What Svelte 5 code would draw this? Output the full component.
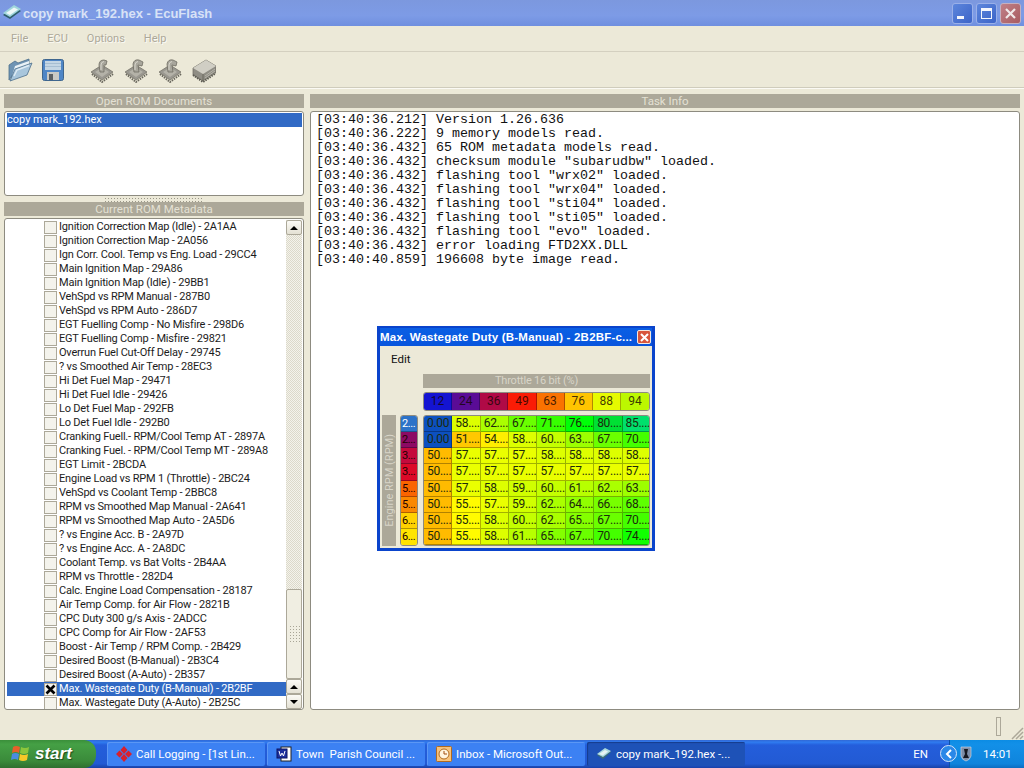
<script>
  const menus = ['File', 'ECU', 'Options', 'Help'];

  const logLines = [
    '[03:40:36.212] Version 1.26.636',
    '[03:40:36.222] 9 memory models read.',
    '[03:40:36.432] 65 ROM metadata models read.',
    '[03:40:36.432] checksum module "subarudbw" loaded.',
    '[03:40:36.432] flashing tool "wrx02" loaded.',
    '[03:40:36.432] flashing tool "wrx04" loaded.',
    '[03:40:36.432] flashing tool "sti04" loaded.',
    '[03:40:36.432] flashing tool "sti05" loaded.',
    '[03:40:36.432] flashing tool "evo" loaded.',
    '[03:40:36.432] error loading FTD2XX.DLL',
    '[03:40:40.859] 196608 byte image read.'
  ];

  const romItems = [
    'Ignition Correction Map (Idle) - 2A1AA',
    'Ignition Correction Map - 2A056',
    'Ign Corr. Cool. Temp vs Eng. Load - 29CC4',
    'Main Ignition Map - 29A86',
    'Main Ignition Map (Idle) - 29BB1',
    'VehSpd vs RPM Manual - 287B0',
    'VehSpd vs RPM Auto - 286D7',
    'EGT Fuelling Comp - No Misfire - 298D6',
    'EGT Fuelling Comp - Misfire - 29821',
    'Overrun Fuel Cut-Off Delay - 29745',
    '? vs Smoothed Air Temp - 28EC3',
    'Hi Det Fuel Map - 29471',
    'Hi Det Fuel Idle - 29426',
    'Lo Det Fuel Map - 292FB',
    'Lo Det Fuel Idle - 292B0',
    'Cranking Fuell.- RPM/Cool Temp AT - 2897A',
    'Cranking Fuel. - RPM/Cool Temp MT - 289A8',
    'EGT Limit - 2BCDA',
    'Engine Load vs RPM 1 (Throttle) - 2BC24',
    'VehSpd vs Coolant Temp - 2BBC8',
    'RPM vs Smoothed Map Manual - 2A641',
    'RPM vs Smoothed Map Auto - 2A5D6',
    '? vs Engine Acc. B - 2A97D',
    '? vs Engine Acc. A - 2A8DC',
    'Coolant Temp. vs Bat Volts - 2B4AA',
    'RPM vs Throttle - 282D4',
    'Calc. Engine Load Compensation - 28187',
    'Air Temp Comp. for Air Flow - 2821B',
    'CPC Duty 300 g/s Axis - 2ADCC',
    'CPC Comp for Air Flow - 2AF53',
    'Boost - Air Temp / RPM Comp. - 2B429',
    'Desired Boost (B-Manual) - 2B3C4',
    'Desired Boost (A-Auto) - 2B357',
    'Max. Wastegate Duty (B-Manual) - 2B2BF',
    'Max. Wastegate Duty (A-Auto) - 2B25C'
  ];
  const checkedIndex = 33;

  const columns = [
    { label: '12', color: '#1414d2' },
    { label: '24', color: '#5a0c96' },
    { label: '36', color: '#b00a46' },
    { label: '49', color: '#fa1c06' },
    { label: '63', color: '#fa7200' },
    { label: '76', color: '#ffc400' },
    { label: '88', color: '#e6fa00' },
    { label: '94', color: '#bcf800' }
  ];

  const rowAxis = [
    { label: '2...', color: '#2c72c8', text: '#fff' },
    { label: '2...', color: '#8c0a64', text: '#200' },
    { label: '3...', color: '#c40a3c', text: '#200' },
    { label: '3...', color: '#dc0a28', text: '#200' },
    { label: '5...', color: '#fa6400', text: '#200' },
    { label: '5...', color: '#fa8800', text: '#200' },
    { label: '6...', color: '#ffd200', text: '#200' },
    { label: '6...', color: '#ffe400', text: '#200' }
  ];

  const table = [
    [0, 58, 62, 67, 71, 76, 80, 85],
    [0, 51, 54, 58, 60, 63, 67, 70],
    [50, 57, 57, 57, 58, 58, 58, 58],
    [50, 57, 57, 57, 57, 57, 57, 57],
    [50, 57, 58, 59, 60, 61, 62, 63],
    [50, 55, 57, 59, 62, 64, 66, 68],
    [50, 55, 58, 60, 62, 65, 67, 70],
    [50, 55, 58, 61, 65, 67, 70, 74]
  ];

  function cellColor(v) {
    if (v === 0) return '#0c50c0';
    return `hsl(${44 + (v - 50) * 3}, 100%, ${v > 76 ? 44 : 50}%)`;
  }

  const tasks = [
    { label: 'Call Logging - [1st Lin...', icon: 'diamond' },
    { label: 'Town  Parish Council ...', icon: 'word' },
    { label: 'Inbox - Microsoft Out...', icon: 'outlook' },
    { label: 'copy mark_192.hex -...', icon: 'chip', active: true }
  ];

  const flashArrows = [
    'M10 15 L9 8 Q9 3 14 3 L17 4 L16 8 L14 8 L14 15 Z',
    'M10 15 L9 7 Q10 2 15 3 L19 5 L18 9 L14 8 L15 15 Z',
    'M10 15 L9 7 Q10 2 15 3 L19 5 L18 9 L14 8 L15 15 Z'
  ];
</script>

{#snippet chipSmall()}
  <svg width="16" height="14" viewBox="0 0 16 14">
    <path d="M1 8 L9 2 L15 5 L7 12 Z" fill="#3c6e78" />
    <path d="M1 7 L9 1 L15 4 L7 10 Z" fill="#a9d8de" />
    <path d="M3 7 L9 3 L12 4.500 L7 8.500 Z" fill="#e6f4f4" />
  </svg>
{/snippet}

{#snippet flashIcon(arrow)}
  <svg class="chip" width="24" height="26" viewBox="0 0 24 26">
    <path d="M1 15 L12 8 L23 15 L12 23 Z" fill="#9a9890" stroke="#6e6c62" stroke-width="0.700" />
    <path d="M2 17 L12 25 L23 17" fill="none" stroke="#6a685e" stroke-width="2" stroke-dasharray="1.500 1" />
    <path d="M5 15 L12 10.500 L19 15 L12 20 Z" fill="#b4b2a8" />
    <path d={arrow} fill="#a8a69c" stroke="#6e6c62" stroke-width="0.800" />
    <path d="M11 13 L11 8 Q11 5 14 4.500" fill="none" stroke="#d8d6cc" />
  </svg>
{/snippet}

<div class="desktop">
  <header class="titlebar">
    <span class="title-icon">
      <svg width="20" height="18" viewBox="0 0 20 18">
        <path d="M1 11 L12 3 L19 7 L8 15 Z" fill="#2f5f6c" />
        <path d="M1 9 L12 1 L19 5 L8 13 Z" fill="#9fd6dc" />
        <path d="M4 9 L12 3.500 L16 5.500 L8 11 Z" fill="#eef8f8" />
      </svg>
    </span>
    <span class="title-text">copy mark_192.hex - EcuFlash</span>
    <div class="win-buttons">
      <span class="win-btn"><i class="min-glyph"></i></span>
      <span class="win-btn"><i class="max-glyph"></i></span>
      <span class="win-btn close">
        <svg width="13" height="13" viewBox="0 0 13 13"><path d="M2 2 L11 11 M11 2 L2 11" stroke="#f0e8e8" stroke-width="2.200" /></svg>
      </span>
    </div>
  </header>

  <nav class="menubar">
    {#each menus as menu}
      <span>{menu}</span>
    {/each}
  </nav>

  <div class="toolbar">
    <svg class="open-icon" width="26" height="26" viewBox="0 0 26 26">
      <path d="M2 23 L2 8 L8 4 L11 6 L22 2 L22 7 L9 13 Z" fill="#6f94b4" stroke="#4c6e8c" stroke-width="0.800" />
      <path d="M5 19 L8 9 L22 4 L22 8 Z" fill="#eaf2f6" />
      <path d="M3 24 L8 12 L25 6 L20 18 Z" fill="#a8c6dc" stroke="#4c6e8c" stroke-width="0.800" />
      <path d="M7 19 L10 13 L22 8.500" fill="none" stroke="#dfecf4" stroke-width="1.400" />
    </svg>
    <svg class="save-icon" width="22" height="22" viewBox="0 0 22 22">
      <rect x="0.500" y="0.500" width="21" height="21" rx="2" fill="#4f86c6" stroke="#3f668e" />
      <rect x="3" y="2" width="16" height="9" fill="#c4d6e4" />
      <path d="M3 4.500 H19 M3 7.500 H19" stroke="#a6bed2" />
      <rect x="5" y="13" width="12" height="8" fill="#c8c8c4" />
      <rect x="7" y="15" width="4" height="6" fill="#5a5e62" />
    </svg>
    {#each flashArrows as arrow}
      {@render flashIcon(arrow)}
    {/each}
    <svg class="chip" width="24" height="26" viewBox="0 0 24 26">
      <path d="M1 11 L14 3 L24 9 L24 15 L11 24 L1 18 Z" fill="#8f8d84" stroke="#6a685e" stroke-width="0.700" />
      <path d="M1 11 L14 3 L24 9 L11 17 Z" fill="#d0cec4" />
      <path d="M1 18 L11 25 L24 16" fill="none" stroke="#5c5a52" stroke-width="2" stroke-dasharray="1.500 1" />
      <path d="M11 17 L11 24" stroke="#6a685e" />
      <path d="M13 19 L23 12 M13 21 L23 14" stroke="#b4b2a8" />
    </svg>
  </div>

  <main class="workspace">
    <section class="left">
      <h2 class="pane-title">Open ROM Documents</h2>
      <div class="panel docs">
        <div class="doc-row">copy mark_192.hex</div>
      </div>
      <div class="splitter"></div>
      <h2 class="pane-title">Current ROM Metadata</h2>
      <div class="panel meta">
        <ul class="rom-list">
          {#each romItems as item, i}
            <li class:selected={i === checkedIndex}>
              <span class="check">
                {#if i === checkedIndex}
                  <svg width="11" height="11" viewBox="0 0 11 11"><path d="M1.500 1.500 L9.500 9.500 M9.500 1.500 L1.500 9.500" stroke="#000" stroke-width="2.600" /></svg>
                {/if}
              </span>
              <span class="rom-text">{item}</span>
            </li>
          {/each}
        </ul>
        <div class="scrollbar">
          <span class="sb-btn"><i class="arrow up"></i></span>
          <span class="sb-track"></span>
          <span class="sb-thumb"><i class="grip"></i></span>
          <span class="sb-btn"><i class="arrow up"></i></span>
          <span class="sb-btn"><i class="arrow down"></i></span>
        </div>
      </div>
    </section>

    <section class="right">
      <h2 class="pane-title">Task Info</h2>
      <div class="panel log">
        {#each logLines as line}
          <div>{line}</div>
        {/each}
      </div>
    </section>
  </main>

  <div class="statusbar">
    <span class="status-box"></span>
    <svg class="size-grip" width="14" height="14" viewBox="0 0 14 14">
      <path d="M13 2 L2 13 M13 6 L6 13 M13 10 L10 13" stroke="#aca899" stroke-width="1.500" />
    </svg>
  </div>

  <footer class="taskbar">
    <div class="start">
      <svg width="20" height="18" viewBox="0 0 20 18">
        <path d="M3 2 Q6 0 10 2 L9 8 Q6 6 2 8 Z" fill="#e8602a" />
        <path d="M11 2 Q15 4 19 2 L18 8 Q14 10 10 8 Z" fill="#8cc63c" />
        <path d="M2 9 Q5 7 9 9 L8 15 Q5 13 1 15 Z" fill="#4a8ce0" />
        <path d="M10 9 Q14 11 18 9 L17 15 Q13 17 9 15 Z" fill="#f8c828" />
      </svg>
      <span>start</span>
    </div>
    <div class="tasks">
      {#each tasks as task}
        <div class="task" class:active={task.active}>
          {#if task.icon === 'diamond'}
            <svg width="16" height="16" viewBox="0 0 16 16">
              <path d="M8 0 L11.500 4 L8 8 L4.500 4 Z M8 8 L11.500 12 L8 16 L4.500 12 Z M3.500 4.500 L7 8 L3.500 11.500 L0 8 Z M12.500 4.500 L16 8 L12.500 11.500 L9 8 Z" fill="#d8202c" />
            </svg>
          {:else if task.icon === 'word'}
            <svg width="16" height="16" viewBox="0 0 16 16">
              <rect x="5" y="1" width="10" height="14" fill="#fff" stroke="#222" />
              <rect x="1" y="3" width="10" height="9" fill="#1c2f9c" stroke="#0c1460" />
              <path d="M3 5 L4.500 10 L6 7 L7.500 10 L9 5" fill="none" stroke="#fff" />
            </svg>
          {:else if task.icon === 'outlook'}
            <svg width="16" height="16" viewBox="0 0 16 16">
              <rect x="0.500" y="0.500" width="15" height="15" rx="1" fill="#f6c27c" stroke="#b06a20" />
              <circle cx="8" cy="8" r="5" fill="#fff4de" stroke="#b06a20" />
              <path d="M8 5 L8 8 L11 8" fill="none" stroke="#a04c10" />
            </svg>
          {:else}
            {@render chipSmall()}
          {/if}
          <span>{task.label}</span>
        </div>
      {/each}
    </div>
    <span class="lang">EN</span>
    <div class="tray">
      <span class="tray-chevron">
        <svg width="10" height="10" viewBox="0 0 10 10"><path d="M7 1 L3 5 L7 9" fill="none" stroke="#fff" stroke-width="2" /></svg>
      </span>
      <svg width="12" height="16" viewBox="0 0 12 16">
        <path d="M1 1 L11 1 L11 10 Q10 14 6 15 Q2 14 1 10 Z" fill="#7c8ea8" stroke="#d8e0ec" stroke-width="0.600" />
        <path d="M4 3 L8 3 L7 8 L9 12 L3 12 L5 8 Z" fill="#141820" />
      </svg>
      <span class="clock">14:01</span>
    </div>
  </footer>

  <div class="float-win">
    <div class="float-title">
      <span class="float-title-text">Max. Wastegate Duty (B-Manual) - 2B2BF-c...</span>
      <span class="float-close">
        <svg width="9" height="9" viewBox="0 0 9 9"><path d="M1 1 L8 8 M8 1 L1 8" stroke="#fff" stroke-width="2" /></svg>
      </span>
    </div>
    <div class="float-body">
      <div class="float-menu">Edit</div>
      <div class="map">
        <div class="x-title">Throttle 16 bit (%)</div>
        <div class="x-axis">
          {#each columns as col}
            <span style="background: {col.color}">{col.label}</span>
          {/each}
        </div>
        <div class="y-title"><span>Engine RPM (RPM)</span></div>
        <div class="y-axis">
          {#each rowAxis as row}
            <span style="background: {row.color}; color: {row.text}">{row.label}</span>
          {/each}
        </div>
        <div class="cells">
          {#each table as row}
            {#each row as v}
              <span style="background: {cellColor(v)}">{v === 0 ? '0.00' : v + '....'}</span>
            {/each}
          {/each}
        </div>
      </div>
    </div>
  </div>
</div>

<style>
  :global(*, *::before, *::after) { box-sizing: border-box; }
  :global(body) {
    background: #ece9d8;
    font-family: Roboto, 'Liberation Sans', Arial, sans-serif;
    font-size: 11px;
    color: #1c1c1c;
  }
  .desktop {
    position: relative;
    width: 1024px;
    height: 768px;
    overflow: hidden;
    display: flex;
    flex-direction: column;
    background: #ece9d8;
  }

  .titlebar {
    height: 26px;
    flex: none;
    display: flex;
    align-items: center;
    padding-left: 2px;
    background: linear-gradient(#7c98de, #7d9be6 60%, #6f8fdf);
  }
  .title-icon { display: flex; width: 21px; }
  .title-text {
    font-family: 'Liberation Sans', Arial, sans-serif;
    font-size: 13px;
    font-weight: 700;
    color: #d8e2f6;
  }
  .win-buttons {
    margin-left: auto;
    display: flex;
    gap: 3px;
    padding-right: 3px;
    padding-top: 1px;
  }
  .win-btn {
    width: 21px;
    height: 21px;
    border-radius: 3px;
    border: 1px solid #9ab0e8;
    background: linear-gradient(135deg, #5d86dc, #3c64c8);
    position: relative;
    display: flex;
    align-items: center;
    justify-content: center;
  }
  .win-btn.close {
    background: linear-gradient(135deg, #c08088, #a85c60);
    border-color: #c4b0c0;
  }
  .min-glyph {
    position: absolute;
    left: 4px;
    bottom: 4px;
    width: 7px;
    height: 3px;
    background: #f4f6fc;
  }
  .max-glyph {
    width: 11px;
    height: 11px;
    border: 1px solid #f4f6fc;
    border-top-width: 3px;
  }

  .menubar {
    height: 26px;
    flex: none;
    display: flex;
    align-items: center;
    gap: 19px;
    padding-left: 11px;
    font-size: 11px;
    color: #aca899;
    text-shadow: 1px 1px 0 #fbfaf4;
    border-bottom: 1px solid #d4d0c0;
  }

  .toolbar {
    height: 36px;
    flex: none;
    display: flex;
    align-items: center;
    padding-left: 7px;
    border-bottom: 1px solid #cfccbc;
    box-shadow: 0 1px 0 #fbfaf4;
  }
  .open-icon { margin-right: 9px; }
  .save-icon { margin-right: 26px; }
  .chip { margin-right: 10px; }

  .workspace {
    flex: 1;
    min-height: 0;
    display: grid;
    grid-template-columns: 300px 710px;
    gap: 6px;
    padding: 6px 4px 0;
  }
  .left, .right {
    display: flex;
    flex-direction: column;
    min-height: 0;
  }
  .pane-title {
    margin: 0;
    height: 14px;
    flex: none;
    background: #aca899;
    color: #e4e1d4;
    font-size: 11.500px;
    font-weight: 400;
    line-height: 14px;
    text-align: center;
  }
  .panel {
    background: #fff;
    border: 1px solid #8d8b80;
    border-radius: 3px;
    margin-top: 3px;
  }
  .docs {
    height: 85px;
    flex: none;
    padding: 1px 1px 0 2px;
  }
  .doc-row {
    height: 14px;
    line-height: 14px;
    background: #316ac5;
    color: #fff;
    padding-left: 0;
  }
  .splitter {
    height: 6px;
    flex: none;
    margin: 0 100px;
    background-image: radial-gradient(#9a9788 0.700px, transparent 0.800px);
    background-size: 3px 3px;
    background-position: 0 1px;
  }
  .meta {
    flex: 1;
    min-height: 0;
    margin-top: 2px;
    display: flex;
    padding: 1px 1px 0 2px;
    overflow: hidden;
  }
  .rom-list {
    list-style: none;
    margin: 0;
    padding: 0;
    flex: 1;
    min-width: 0;
  }
  .rom-list li {
    height: 14px;
    display: flex;
    align-items: center;
    padding-left: 37px;
    line-height: 14px;
    white-space: nowrap;
    letter-spacing: -0.200px;
  }
  .rom-list li.selected {
    background: #316ac5;
    color: #fff;
  }
  .check {
    width: 13px;
    height: 13px;
    flex: none;
    margin-right: 2px;
    border: 1px solid #aca899;
    background: #f4f3ec;
    display: flex;
    align-items: center;
    justify-content: center;
  }

  .scrollbar {
    width: 16px;
    flex: none;
    display: flex;
    flex-direction: column;
    background: repeating-conic-gradient(#f4f3ec 0 25%, #dcd9ca 0 50%) 0 0 / 2px 2px;
  }
  .sb-btn {
    height: 15px;
    flex: none;
    border: 1px solid #aca899;
    border-radius: 2px;
    background: linear-gradient(#fbfaf5, #e4e1d4);
    display: flex;
    align-items: center;
    justify-content: center;
  }
  .sb-track { flex: 1; }
  .sb-thumb {
    height: 90px;
    flex: none;
    border: 1px solid #aca899;
    border-radius: 2px;
    background: #f0eee2;
    display: flex;
    align-items: center;
    justify-content: center;
  }
  .grip {
    width: 11px;
    height: 19px;
    background-image: radial-gradient(#a8a596 0.700px, transparent 0.800px);
    background-size: 3px 3px;
  }
  .arrow {
    width: 0;
    height: 0;
    border-left: 4px solid transparent;
    border-right: 4px solid transparent;
  }
  .arrow.up { border-bottom: 4px solid #000; }
  .arrow.down { border-top: 4px solid #000; }

  .log {
    flex: 1;
    padding: 1px 0 0 5px;
    font-family: 'Liberation Mono', 'Courier New', monospace;
    font-size: 13.330px;
    line-height: 14px;
    color: #111;
    white-space: pre;
  }

  .statusbar {
    height: 30px;
    flex: none;
    position: relative;
    display: flex;
    justify-content: flex-end;
    align-items: flex-end;
  }
  .status-box {
    width: 5px;
    height: 19px;
    border: 1px solid #aca899;
    margin: 0 23px 4px 0;
  }
  .size-grip { position: absolute; right: 0; bottom: 0; }

  .taskbar {
    height: 28px;
    flex: none;
    display: flex;
    align-items: stretch;
    background: linear-gradient(#3168d5, #2f7bf0 8%, #245edb 18%, #225ad4 85%, #1941a5);
    color: #fff;
    font-size: 11.500px;
  }
  .start {
    width: 96px;
    flex: none;
    display: flex;
    align-items: center;
    gap: 5px;
    padding-left: 10px;
    border-radius: 0 12px 12px 0;
    background: linear-gradient(#3a8f3a, #45a045 15%, #3a8a3a 75%, #2f6f2f);
    font-family: 'Liberation Sans', Arial, sans-serif;
    font-style: italic;
    font-weight: 700;
    font-size: 17px;
    text-shadow: 1px 1px 1px #1c4a1c;
  }
  .tasks {
    margin-left: 11px;
    display: flex;
    gap: 2px;
    align-items: center;
  }
  .task {
    width: 158px;
    height: 24px;
    display: flex;
    align-items: center;
    gap: 4px;
    padding-left: 9px;
    border-radius: 2px;
    background: #3c81f3;
    box-shadow: inset 1px 1px 0 #5b97f5;
    white-space: pre;
  }
  .task.active {
    background: #1e52b7;
    box-shadow: inset 1px 1px 1px #163c8c;
  }
  .lang {
    margin-left: auto;
    align-self: center;
    margin-right: 21px;
  }
  .tray {
    width: 75px;
    flex: none;
    display: flex;
    align-items: center;
    background: linear-gradient(#0c8ce4, #1290e8 15%, #0f84dc 85%, #0c6cc0);
    box-shadow: inset 1px 0 0 #0a50a8;
    position: relative;
    padding-left: 11px;
    gap: 11px;
  }
  .tray-chevron {
    position: absolute;
    left: -9px;
    top: 5px;
    width: 17px;
    height: 17px;
    border-radius: 50%;
    background: #2a88e8;
    border: 1px solid #d4e4f8;
    display: flex;
    align-items: center;
    justify-content: center;
  }

  .float-win {
    position: absolute;
    left: 377px;
    top: 326px;
    width: 278px;
    height: 225px;
    background: #0a44cc;
    border: 3px solid #0a44cc;
    border-top-width: 2px;
    display: flex;
    flex-direction: column;
    box-shadow: inset 0 0 0 1px #0831d9;
  }
  .float-title {
    height: 18px;
    flex: none;
    display: flex;
    align-items: center;
    justify-content: space-between;
    color: #fff;
    background: linear-gradient(#0a5fe4, #0855dd);
  }
  .float-title-text {
    font-family: 'Liberation Sans', Arial, sans-serif;
    font-weight: 700;
    font-size: 11.500px;
    white-space: nowrap;
    letter-spacing: 0.200px;
  }
  .float-close {
    width: 14px;
    height: 14px;
    border: 1px solid #f4e8e0;
    border-radius: 2px;
    background: #d8563c;
    display: flex;
    align-items: center;
    justify-content: center;
    margin-right: 1px;
  }
  .float-body {
    flex: 1;
    min-height: 0;
    background: #ece9d8;
    display: flex;
    flex-direction: column;
  }
  .float-menu {
    height: 28px;
    flex: none;
    padding: 6px 0 0 11px;
    line-height: 14px;
    font-size: 11.500px;
    color: #111;
  }
  .map {
    display: grid;
    grid-template-columns: 14px 4px 18px 5px 227px;
    grid-template-rows: 14px 4px 19px 4px 131px;
    padding-left: 2px;
    font-size: 12px;
  }
  .x-title {
    grid-column: 5;
    grid-row: 1;
    background: #aca899;
    color: #d8d5c8;
    text-align: center;
    line-height: 14px;
    font-size: 11px;
    letter-spacing: -0.200px;
  }
  .x-axis {
    grid-column: 5;
    grid-row: 3;
    display: grid;
    grid-template-columns: repeat(8, 1fr);
    border: 1px solid #8d8b80;
    border-radius: 3px;
    overflow: hidden;
  }
  .x-axis span {
    text-align: center;
    line-height: 17px;
    color: rgba(20, 5, 0, 0.8);
    border-right: 1px solid rgba(0, 0, 0, 0.3);
  }
  .x-axis span:last-child { border-right: 0; }
  .y-title {
    grid-column: 1;
    grid-row: 5;
    background: #aca899;
    color: #d8d5c8;
    display: flex;
    align-items: center;
    justify-content: center;
    font-size: 11px;
  }
  .y-title span {
    writing-mode: vertical-rl;
    transform: rotate(180deg);
    white-space: nowrap;
  }
  .y-axis {
    grid-column: 3;
    grid-row: 5;
    display: grid;
    grid-template-rows: repeat(8, 1fr);
    border: 1px solid #8d8b80;
    border-radius: 3px;
    overflow: hidden;
  }
  .y-axis span {
    padding-left: 1px;
    line-height: 15px;
    font-size: 11px;
    letter-spacing: -0.400px;
    border-bottom: 1px solid rgba(0, 0, 0, 0.3);
  }
  .y-axis span:last-child { border-bottom: 0; }
  .cells {
    grid-column: 5;
    grid-row: 5;
    display: grid;
    grid-template-columns: repeat(8, 1fr);
    grid-template-rows: repeat(8, 1fr);
    border: 1px solid #8d8b80;
    border-radius: 3px;
    overflow: hidden;
  }
  .cells span {
    padding-left: 3px;
    line-height: 15px;
    font-size: 12px;
    letter-spacing: -0.300px;
    white-space: nowrap;
    color: #1c2a0c;
    border-right: 1px solid rgba(0, 0, 0, 0.3);
    border-bottom: 1px solid rgba(0, 0, 0, 0.3);
  }
</style>
